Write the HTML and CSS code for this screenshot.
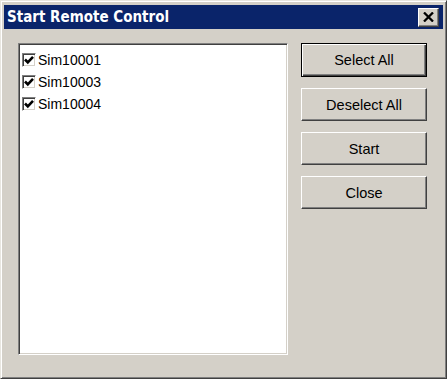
FILE: index.html
```html
<!doctype html>
<html lang="en">
	<head>
		<meta charset="UTF-8" />
		<title>Start Remote Control</title>
		<link rel="stylesheet" href="styles.css">
	</head>
	<body>
		<div class="window">
			<div class="titlebar">
				<span class="title">Start Remote Control</span>
				<button class="close-btn" aria-label="Close">
					<svg width="11" height="10" viewBox="0 0 11 10">
						<path d="M1 0.5 L10 9.5 M10 0.5 L1 9.5" stroke="#000" stroke-width="2.3" />
					</svg>
				</button>
			</div>

			<div class="content">
				<div class="list">
					<label class="item"><span class="check"><svg width="10" height="10" viewBox="0 0 10 10"><path d="M1 4.5 L3.8 7.3 L9 1.8" stroke="#000" stroke-width="2.6" fill="none" /></svg></span>Sim10001</label>
					<label class="item"><span class="check"><svg width="10" height="10" viewBox="0 0 10 10"><path d="M1 4.5 L3.8 7.3 L9 1.8" stroke="#000" stroke-width="2.6" fill="none" /></svg></span>Sim10003</label>
					<label class="item"><span class="check"><svg width="10" height="10" viewBox="0 0 10 10"><path d="M1 4.5 L3.8 7.3 L9 1.8" stroke="#000" stroke-width="2.6" fill="none" /></svg></span>Sim10004</label>
				</div>

				<div class="buttons">
					<button class="btn default">Select All</button>
					<button class="btn">Deselect All</button>
					<button class="btn">Start</button>
					<button class="btn">Close</button>
				</div>
			</div>
		</div>
	</body>
</html>
```

FILE: styles.css
```css
body {
	margin: 0;
	background-color: #ffffff;
	font-family: "Liberation Sans", Arial, sans-serif;
}
.window {
	box-sizing: border-box;
	width: 447px;
	height: 379px;
	background-color: #d4d0c8;
	border: 1px solid;
	border-color: #e8e6e0 #404040 #404040 #e8e6e0;
	box-shadow: inset 1px 1px 0 #ffffff, inset -1px -1px 0 #808080;
	padding: 4px 3px 3px 3px;
	display: flex;
	flex-direction: column;
}
.titlebar {
	height: 24px;
	background-color: #0a246a;
	display: flex;
	align-items: center;
	justify-content: space-between;
	padding: 0 4px 0 3px;
}
.title {
	color: #ffffff;
	font-family: "DejaVu Sans Condensed", "DejaVu Sans", sans-serif;
	font-weight: bold;
	font-size: 15px;
}
.close-btn {
	box-sizing: border-box;
	width: 21px;
	height: 19px;
	padding: 0;
	background-color: #d4d0c8;
	border: 1px solid;
	border-color: #ffffff #404040 #404040 #ffffff;
	box-shadow: inset -1px -1px 0 #808080;
	display: flex;
	align-items: center;
	justify-content: center;
}
.content {
	flex: 1;
	display: flex;
	padding: 14px 16px 20px 14px;
	gap: 13px;
}
.list {
	box-sizing: border-box;
	width: 270px;
	background-color: #ffffff;
	border: 1px solid;
	border-color: #808080 #ffffff #ffffff #808080;
	box-shadow: inset 1px 1px 0 #404040, inset -1px -1px 0 #d4d0c8;
	padding: 5px 3px;
	display: flex;
	flex-direction: column;
}
.item {
	display: flex;
	align-items: center;
	height: 22px;
	font-size: 14px;
	color: #000000;
	gap: 2px;
}
.check {
	box-sizing: border-box;
	width: 14px;
	height: 14px;
	background-color: #ffffff;
	border: 1px solid;
	border-color: #808080 #ffffff #ffffff #808080;
	box-shadow: inset 1px 1px 0 #404040, inset -1px -1px 0 #d4d0c8;
	display: flex;
	align-items: center;
	justify-content: center;
}
.buttons {
	display: flex;
	flex-direction: column;
	gap: 11px;
}
.btn {
	box-sizing: border-box;
	width: 126px;
	height: 33px;
	background-color: #d4d0c8;
	font-family: "Liberation Sans", Arial, sans-serif;
	font-size: 14.5px;
	color: #000000;
	border: 1px solid;
	border-color: #ffffff #404040 #404040 #ffffff;
	box-shadow: inset -1px -1px 0 #808080;
	padding: 0;
}
.btn.default {
	height: 34px;
	border: 1px solid #000000;
	box-shadow: inset 1px 1px 0 #ffffff, inset -1px -1px 0 #404040, inset -2px -2px 0 #808080;
}
```
